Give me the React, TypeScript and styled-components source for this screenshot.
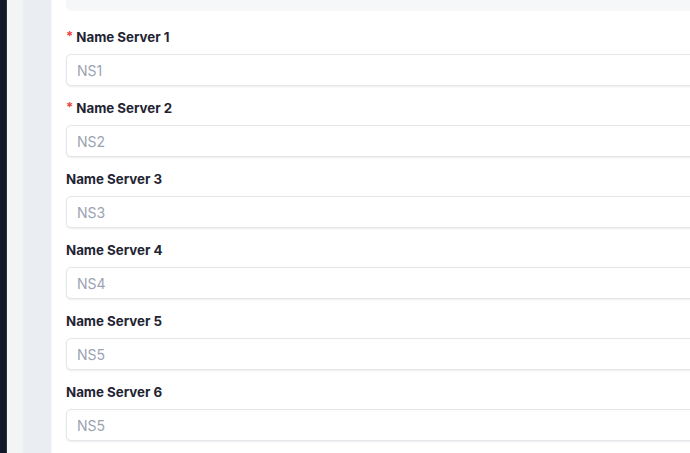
import React from 'react';
import styled, { createGlobalStyle } from 'styled-components';

const GlobalStyle = createGlobalStyle`
  html, body {
    margin: 0;
    padding: 0;
    overflow: hidden;
    background: #ffffff;
  }
  body {
    font-family: Inter, "Noto Sans", sans-serif;
  }
`;

interface Field {
  label: string;
  placeholder: string;
  required?: boolean;
}

const fields: Field[] = [
  { label: 'Name Server 1', placeholder: 'NS1', required: true },
  { label: 'Name Server 2', placeholder: 'NS2', required: true },
  { label: 'Name Server 3', placeholder: 'NS3' },
  { label: 'Name Server 4', placeholder: 'NS4' },
  { label: 'Name Server 5', placeholder: 'NS5' },
  { label: 'Name Server 6', placeholder: 'NS5' },
];

const App = () => {
  return (
    <__Page>
      <GlobalStyle />
      <__Sidebar />
      <__Gutter />
      <__Card>
        <__TopBox />
        {fields.map((f) => (
          <__Group key={f.label}>
            <__Label>
              {f.required && <__Star>*</__Star>}
              {f.label}
            </__Label>
            <__Input placeholder={f.placeholder} />
          </__Group>
        ))}
      </__Card>
    </__Page>
  );
};

export default App;

const __Page = styled.div`
  display: flex;
  width: 690px;
  height: 453px;
  overflow: hidden;
`;

const __Sidebar = styled.div`
  width: 6px;
  flex-shrink: 0;
  background: #111827;
  border-right: 1px solid #2b3342;
`;

const __Gutter = styled.div`
  width: 44px;
  flex-shrink: 0;
  background: linear-gradient(90deg, #f3f5f7 0px, #f2f4f6 15px, #ebeef2 17px, #e9edf1 44px);
  border-right: 1px solid #f4f5f7;
`;

const __Card = styled.div`
  flex: 1;
  min-width: 0;
  background: #ffffff;
  padding: 0 0 0 14px;
  margin-right: -20px;
  display: flex;
  flex-direction: column;
`;

const __TopBox = styled.div`
  height: 11px;
  background: #f6f7f9;
  border-radius: 0 0 6px 6px;
  margin-bottom: 16px;
`;

const __Group = styled.div`
  display: flex;
  flex-direction: column;
  margin-bottom: 12px;
`;

const __Label = styled.label`
  font-family: Inter, "Noto Sans", sans-serif;
  font-size: 13.3px;
  font-weight: 700;
  line-height: 20px;
  color: #1f2433;
  margin-bottom: 7px;
  display: flex;
  align-items: center;
`;

const __Star = styled.span`
  color: #ef4444;
  font-size: 13px;
  margin-right: 3px;
  position: relative;
  top: -1px;
`;

const __Input = styled.input`
  box-sizing: border-box;
  height: 32px;
  width: 100%;
  border: 1px solid #e3e6ea;
  border-radius: 5px;
  box-shadow: 0 1px 2px rgba(0, 0, 0, 0.08);
  padding: 0 10px;
  font-family: Inter, "Noto Sans", sans-serif;
  font-size: 14px;
  color: #374151;
  background: #ffffff;
  outline: none;
  &::placeholder {
    color: #9aa3b2;
  }
`;
